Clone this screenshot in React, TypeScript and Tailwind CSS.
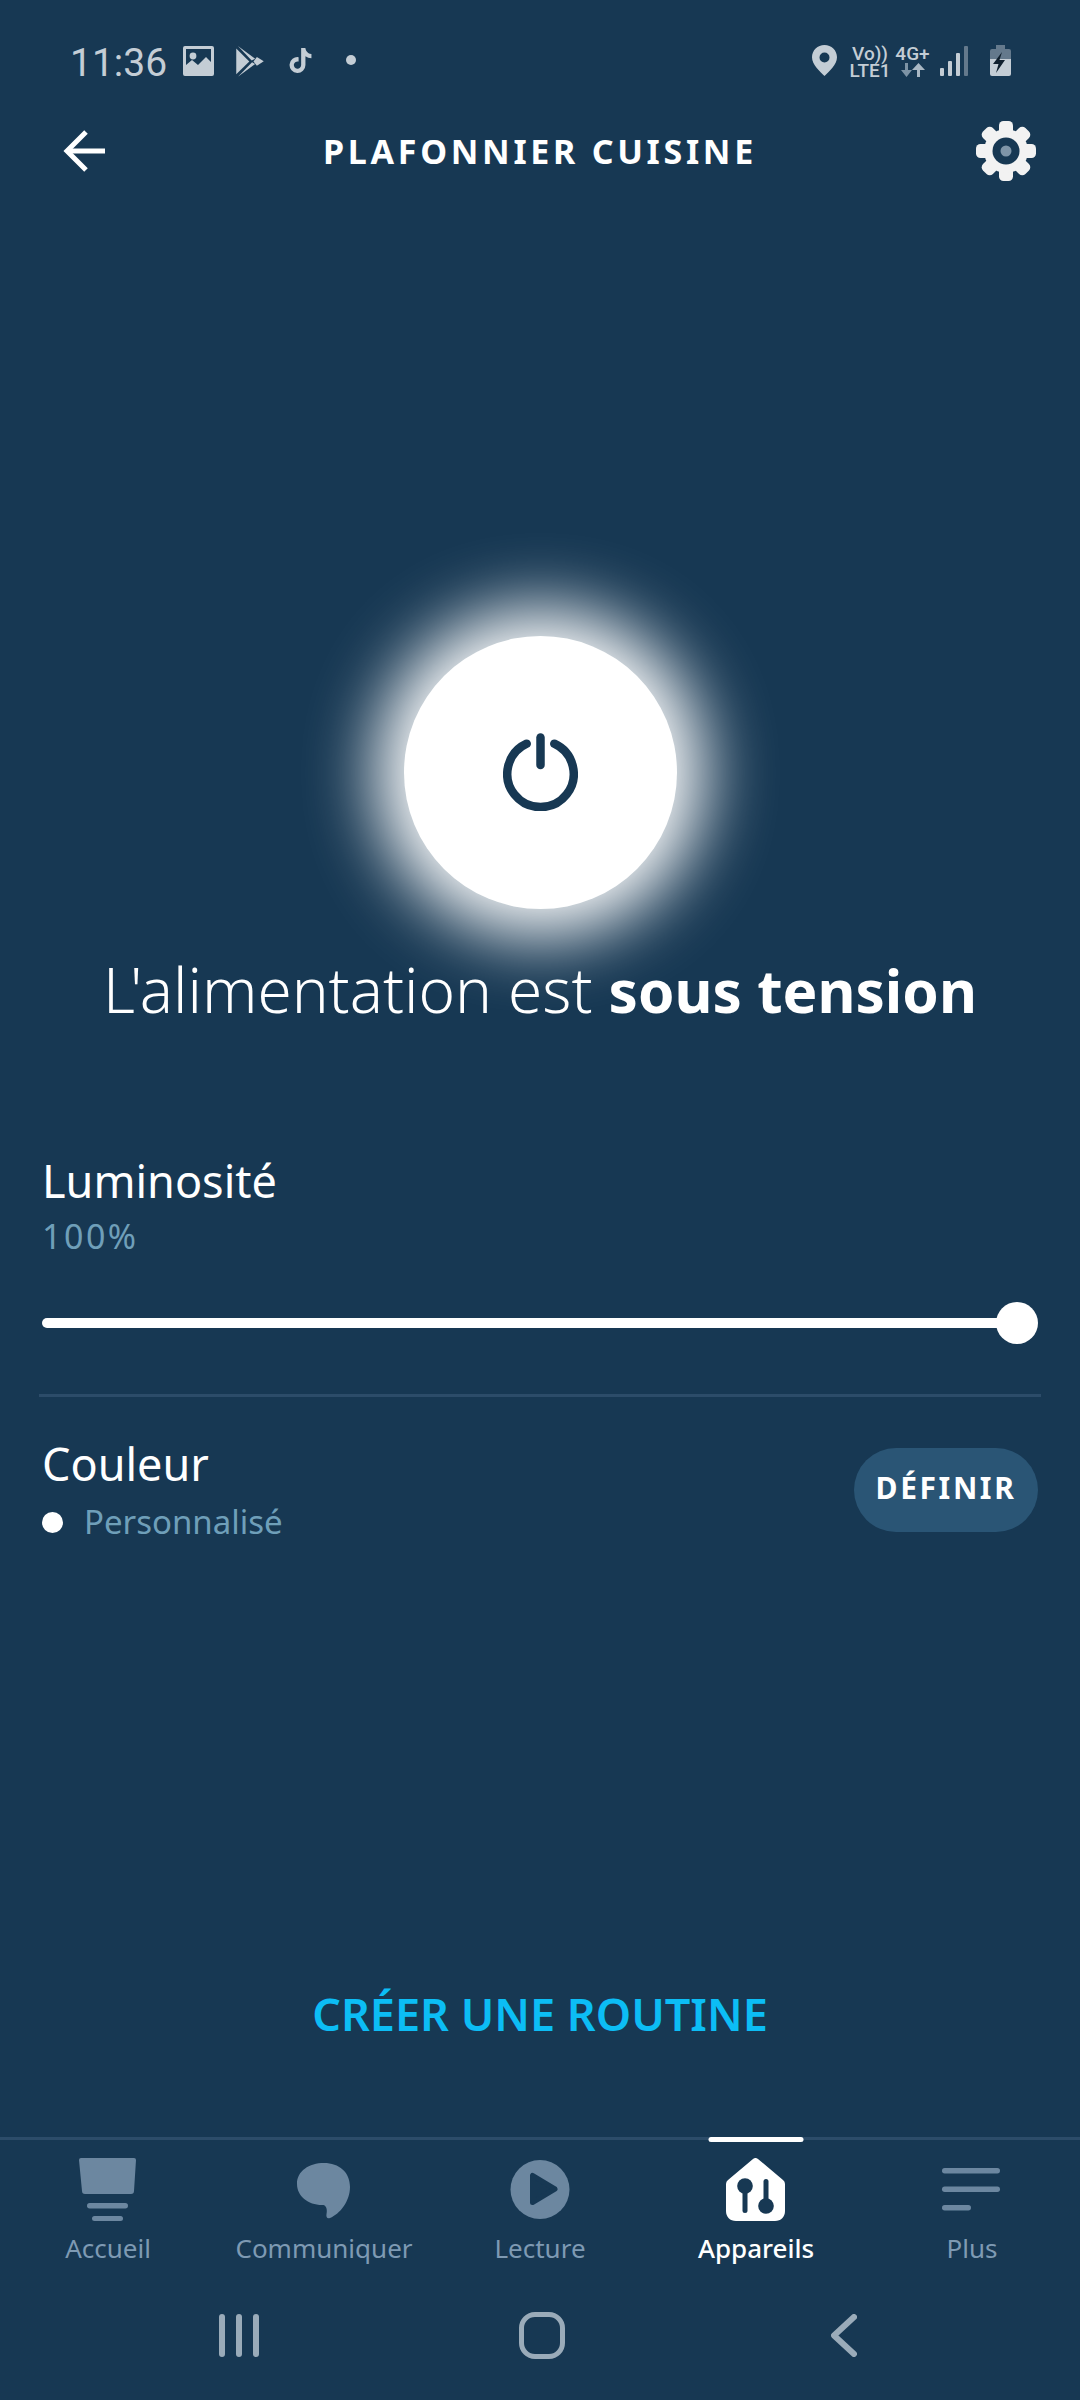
import React from 'react';
import { FaTiktok } from 'react-icons/fa';

const BG = '#173853';
const STATUS = '#C4CDD5';
const MUTED = '#6C87A0';

const StatusBar: React.FC = () => (
  <div className="relative h-[120px] shrink-0 flex justify-between text-[#C4CDD5]">
    {/* Left side */}
    <div className="flex items-start pl-[70px] pt-[40px]">
      <span className="font-['Roboto'] text-[39px] leading-[46px] w-[113px]">11:36</span>
      {/* Gallery */}
      <svg width="31" height="30" viewBox="0 0 31 30" className="mt-[6px]">
        <path fillRule="evenodd" fill={STATUS} d="M2 0h27a2 2 0 0 1 2 2v26a2 2 0 0 1-2 2H2a2 2 0 0 1-2-2V2a2 2 0 0 1 2-2zM3 3v16l6-5 6 5 8-8 5 5V3z" />
        <circle cx="10" cy="10" r="3.4" fill={STATUS} />
      </svg>
      {/* Play store */}
      <svg width="28" height="31" viewBox="0 0 80 90" className="ml-[22px] mt-[6px]">
        <path fill={STATUS} d="M0 7v75l38-37z" />
        <path fill={STATUS} d="M5 0l50 37-10 5z" />
        <path fill={STATUS} d="M60 32l20 12-20 13-10-12z" />
        <path fill={STATUS} d="M5 89l50-37-9-5z" />
      </svg>
      <FaTiktok size={25} className="ml-[24px] mt-[8px]" color={STATUS} />
      <span className="ml-[33px] mt-[15px] w-[10px] h-[10px] rounded-full bg-[#C4CDD5]" />
    </div>

    {/* Right side */}
    <div className="flex items-start pr-[69px] pt-[45px]">
      <svg width="25" height="31" viewBox="0 0 25 31">
        <path fillRule="evenodd" fill={STATUS} d="M12.5 0C19.4 0 25 5.4 25 12.3 25 20 17 26.5 12.5 31 8 26.5 0 20 0 12.3 0 5.4 5.6 0 12.5 0zm0 7.5a5 5 0 1 0 0 10 5 5 0 0 0 0-10z" />
      </svg>
      <div className="ml-[13px] w-[40px] flex flex-col items-center font-['Roboto'] font-medium text-[#C4CDD5]">
        <span className="text-[19px] leading-[17px]">Vo))</span>
        <span className="text-[19px] leading-[15px] mt-[1px]">LTE1</span>
      </div>
      <div className="ml-[6px] w-[33px] flex flex-col items-center">
        <span className="font-['Roboto'] font-medium text-[19px] leading-[17px]">4G+</span>
        <svg width="24" height="14" viewBox="0 0 24 14" className="mt-[1px]">
          <path fill="#7D93A5" d="M4 0h3v7h4l-5.5 7L0 7h4z" />
          <path fill="#A9B7C3" d="M16 14h3V7h5L17.5 0 11 7h5z" />
        </svg>
      </div>
      <svg width="28" height="30" viewBox="0 0 28 30" className="ml-[11px] mt-[1px]">
        <rect x="0" y="22" width="4" height="8" rx="1" fill={STATUS} />
        <rect x="8" y="15" width="4" height="15" rx="1" fill={STATUS} />
        <rect x="16" y="7" width="4" height="23" rx="1" fill={STATUS} />
        <rect x="24" y="0" width="4" height="30" rx="1" fill="#64798C" />
      </svg>
      <svg width="21" height="31" viewBox="0 0 21 31" className="ml-[22px]">
        <rect x="6" y="0" width="9" height="4" fill="#64798C" />
        <path fill="#64798C" d="M2 4h17a2 2 0 0 1 2 2v8H0V6a2 2 0 0 1 2-2z" />
        <path fill={STATUS} d="M0 14h21v15a2 2 0 0 1-2 2H2a2 2 0 0 1-2-2z" />
        <path fill="#10202E" d="M12 7l-9 12h5.5L6 28l9-13H9.5z" />
      </svg>
    </div>
  </div>
);

const Gear: React.FC = () => (
  <svg width="60" height="60" viewBox="0 0 60 60">
    {[0, 45, 90, 135, 180, 225, 270, 315].map((deg) => (
      <rect key={deg} x="23" y="0" width="14" height="18" rx="4.5" fill="#F2F2F2" transform={`rotate(${deg} 30 30)`} />
    ))}
    <circle cx="30" cy="30" r="22" fill="#F2F2F2" />
    <circle cx="30" cy="30" r="13.5" fill={BG} />
    <circle cx="30" cy="30" r="5.5" fill="#7F95A8" />
  </svg>
);

const Header: React.FC = () => (
  <div className="relative h-[62px] shrink-0 px-[44px] flex items-center justify-between">
    <svg width="44" height="44" viewBox="0 0 44 44" fill="none" stroke="#fff" strokeWidth="5" className="ml-[19px]">
      <path d="M42 22H4" />
      <path d="M23 3 4 22l19 19" />
    </svg>
    <h1 className="absolute left-0 right-0 text-center text-white font-bold text-[34px] tracking-[3.7px]">
      PLAFONNIER CUISINE
    </h1>
    <Gear />
  </div>
);

const PowerButton: React.FC = () => (
  <div className="mt-[454px] flex justify-center">
    <div className="w-[273px] h-[273px] rounded-full bg-white flex items-center justify-center shadow-[0_0_70px_28px_rgba(255,255,255,1)]">
      <svg width="75" height="78" viewBox="0 0 75 78" fill="none" stroke={BG} strokeWidth="8.5" strokeLinecap="round" className="-mt-[2px]">
        <path d="M37.5 4.5V32" />
        <path d="M23.7 10.7a33.2 33.2 0 1 0 27.6 0" />
      </svg>
    </div>
  </div>
);

const TabIcon: React.FC<{ name: string; color: string }> = ({ name, color }) => (
  <svg width="64" height="63" viewBox="0 0 64 63">
    {name === 'home' && (
      <>
        <path fill={color} d="M5 0h53a2 2 0 0 1 2 2l-2 31a3 3 0 0 1-3 3H9a3 3 0 0 1-3-3L3 2a2 2 0 0 1 2-2z" />
        <rect x="11" y="45" width="41" height="5.5" rx="2.7" fill={color} />
        <rect x="16" y="58" width="31" height="5" rx="2.5" fill={color} />
      </>
    )}
    {name === 'chat' && (
      <path fill={color} d="M32 5c15 0 26 9 26 24 0 14-10 27-20 31-3 1-4-1-3.5-4 .7-3 .5-8-3-9H30C16 47 5 38 5 26 5 13 17 5 32 5z" />
    )}
    {name === 'play' && (
      <>
        <circle cx="32" cy="31.5" r="29.5" fill={color} />
        <path fill={BG} stroke={BG} strokeWidth="5" strokeLinejoin="round" d="M24.5 17.5v27L47 31z" />
      </>
    )}
    {name === 'devices' && (
      <>
        <path fill={color} d="M29 1a4 4 0 0 1 5 0l25 21a5 5 0 0 1 2 4v27c0 6-4 10-10 10H12C6 63 2 59 2 53V26a5 5 0 0 1 2-4z" />
        <rect x="18.5" y="28" width="5" height="27" rx="2.5" fill={BG} />
        <circle cx="21" cy="28" r="7.8" fill={BG} />
        <rect x="39.5" y="21" width="5" height="27" rx="2.5" fill={BG} />
        <circle cx="42" cy="48" r="7.8" fill={BG} />
      </>
    )}
    {name === 'more' && (
      <>
        <rect x="2" y="10" width="58" height="5.5" rx="2.7" fill={color} />
        <rect x="2" y="28.5" width="58" height="5.5" rx="2.7" fill={color} />
        <rect x="2" y="47" width="29" height="5.5" rx="2.7" fill={color} />
      </>
    )}
  </svg>
);

const tabs = [
  { label: 'Accueil', icon: 'home', active: false },
  { label: 'Communiquer', icon: 'chat', active: false },
  { label: 'Lecture', icon: 'play', active: false },
  { label: 'Appareils', icon: 'devices', active: true },
  { label: 'Plus', icon: 'more', active: false },
];

const TabBar: React.FC = () => (
  <div className="h-[161px] shrink-0 border-t-[3px] border-[#2C4C69] grid grid-cols-5">
    {tabs.map((tab) => (
      <div key={tab.label} className="relative flex flex-col items-center pt-[18px]">
        {tab.active && <span className="absolute -top-[3px] left-1/2 -translate-x-1/2 w-[95px] h-[5px] rounded-full bg-white" />}
        <TabIcon name={tab.icon} color={tab.active ? '#FFFFFF' : MUTED} />
        <span className={`mt-[11px] text-[26px] leading-[32px] ${tab.active ? 'text-white font-medium' : 'text-[#7E9AB3]'}`}>
          {tab.label}
        </span>
      </div>
    ))}
  </div>
);

const NavBar: React.FC = () => (
  <div className="h-[102px] shrink-0 grid grid-cols-3 items-start pt-[16px]">
    <div className="flex gap-[11px] ml-[219px]">
      <span className="w-[6px] h-[43px] rounded-full bg-[#9AABB9]" />
      <span className="w-[6px] h-[43px] rounded-full bg-[#9AABB9]" />
      <span className="w-[6px] h-[43px] rounded-full bg-[#9AABB9]" />
    </div>
    <div className="flex justify-center -mt-[2px] ml-[4px]">
      <span className="w-[46px] h-[47px] rounded-[16px] border-[5px] border-[#9AABB9]" />
    </div>
    <div className="flex">
      <svg width="26" height="43" viewBox="0 0 26 43" fill="none" stroke="#9AABB9" strokeWidth="6" strokeLinecap="round" strokeLinejoin="round" className="ml-[111px]">
        <path d="M23 3 3 21.5 23 40" />
      </svg>
    </div>
  </div>
);

export default function App() {
  return (
    <div className="relative w-[1080px] h-[2400px] overflow-hidden flex flex-col bg-[#173853] font-['Noto_Sans',sans-serif] text-white">
      <StatusBar />
      <Header />
      <PowerButton />

      <p className="mt-[40px] text-center leading-[80px] h-[80px] whitespace-nowrap">
        <span className="text-[62px] font-light">L'alimentation est </span>
        <span className="text-[58.5px] font-bold">sous tension</span>
      </p>

      {/* Luminosité */}
      <div className="mt-[124px] px-[42px]">
        <div className="text-[45px] leading-[56px]">Luminosité</div>
        <div className="mt-[7px] text-[34px] leading-[40px] tracking-[2.5px] text-[#6F9FB9]">100%</div>
        <div className="mt-[46px] h-[42px] flex items-center">
          <div className="flex-1 h-[10px] rounded-l-full bg-white" />
          <div className="-ml-[1px] w-[42px] h-[42px] rounded-full bg-white" />
        </div>
      </div>

      <div className="mt-[50px] mx-[39px] h-[3px] bg-[#2C4C69]" />

      {/* Couleur */}
      <div className="mt-[39px] px-[42px] flex justify-between items-start">
        <div>
          <div className="text-[45px] leading-[56px]">Couleur</div>
          <div className="mt-[10px] flex items-center gap-[21px]">
            <span className="w-[21px] h-[21px] rounded-full bg-white" />
            <span className="text-[33px] leading-[40px] text-[#6F9FB9]">Personnalisé</span>
          </div>
        </div>
        <button className="mt-[12px] w-[184px] h-[84px] pb-[5px] rounded-full bg-[#2A5575] text-[30px] font-bold tracking-[2.6px]">
          DÉFINIR
        </button>
      </div>

      <div className="flex-1" />

      <div className="h-[80px] mb-[83px] flex items-center justify-center text-[45px] font-semibold text-[#0CBDF5]">
        CRÉER UNE ROUTINE
      </div>

      <TabBar />
      <NavBar />
    </div>
  );
}
